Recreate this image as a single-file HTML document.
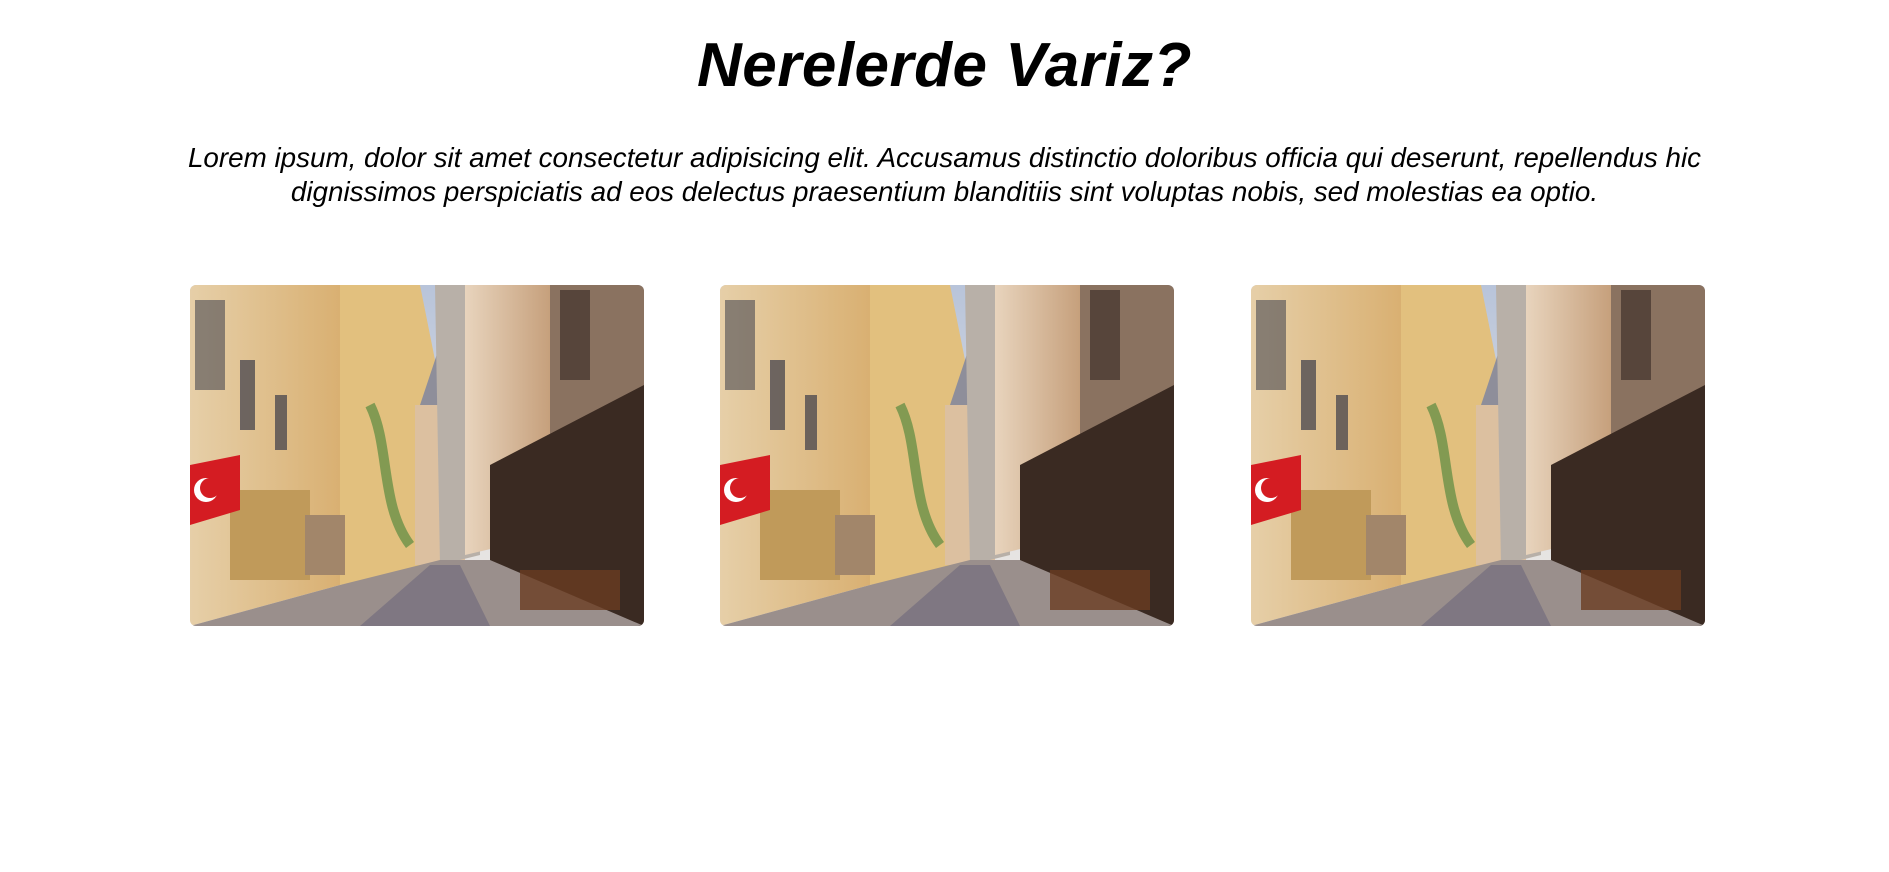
<!DOCTYPE html>
<html><head><meta charset="utf-8">
<style>
html,body{margin:0;padding:0;background:#fff;width:1889px;height:872px;overflow:hidden;}
body{font-family:"Liberation Sans",sans-serif;color:#000;position:relative;}
h1{position:absolute;left:0;right:0;top:28px;margin:0;text-align:center;font-size:62px;font-weight:bold;font-style:italic;letter-spacing:0.5px;line-height:76px;}
p{position:absolute;left:170px;width:1549px;top:141px;margin:0;text-align:center;font-style:italic;font-size:27.8px;line-height:34px;}
.card{position:absolute;top:285px;width:454px;height:341px;border-radius:6px;overflow:hidden;}
</style></head><body>
<h1>Nerelerde Variz?</h1>
<p>Lorem ipsum, dolor sit amet consectetur adipisicing elit. Accusamus distinctio doloribus officia qui deserunt, repellendus hic dignissimos perspiciatis ad eos delectus praesentium blanditiis sint voluptas nobis, sed molestias ea optio.</p>
<svg width="0" height="0" style="position:absolute">
<defs>
<linearGradient id="sky" x1="0" y1="0" x2="0" y2="1"><stop offset="0" stop-color="#b8c4da"/><stop offset="1" stop-color="#f2ece4"/></linearGradient>
<linearGradient id="lb" x1="0" y1="0" x2="1" y2="0"><stop offset="0" stop-color="#e6cfa8"/><stop offset="1" stop-color="#d9b072"/></linearGradient>
<linearGradient id="rb" x1="0" y1="0" x2="1" y2="0"><stop offset="0" stop-color="#e8d4bd"/><stop offset="1" stop-color="#c6a07c"/></linearGradient>
<g id="scene">
<rect width="454" height="341" fill="url(#sky)"/>
<polygon points="0,0 150,0 150,300 0,341" fill="url(#lb)"/>
<polygon points="150,0 230,0 250,100 250,280 150,300" fill="#e2c07e"/>
<rect x="225" y="120" width="50" height="160" fill="#dcc0a0"/>
<polygon points="230,120 250,60 270,120" fill="#8e8e9a"/>
<polygon points="245,0 290,0 290,270 250,280" fill="#b8b0a8"/>
<polygon points="275,0 360,0 360,250 275,270" fill="url(#rb)"/>
<polygon points="360,0 454,0 454,341 300,341 360,250" fill="#8a7260"/>
<polygon points="300,180 454,100 454,341 300,341" fill="#3a2a22"/>
<polygon points="150,300 250,275 300,275 454,341 0,341" fill="#9a8f8c"/>
<polygon points="170,341 240,280 270,280 300,341" fill="#7f7782"/>
<rect x="40" y="205" width="80" height="90" fill="#c09a5a"/>
<rect x="115" y="230" width="40" height="60" fill="#a2866a"/>
<polygon points="0,180 50,170 50,225 0,240" fill="#d41c22"/>
<circle cx="16" cy="205" r="12" fill="#fff"/><circle cx="20" cy="203" r="10" fill="#d41c22"/>
<rect x="5" y="15" width="30" height="90" fill="#4a4a52" opacity=".6"/>
<rect x="50" y="75" width="15" height="70" fill="#3c3c48" opacity=".7"/>
<rect x="85" y="110" width="12" height="55" fill="#3c3c48" opacity=".7"/>
<rect x="370" y="5" width="30" height="90" fill="#4a3a32" opacity=".8"/>
<rect x="330" y="285" width="100" height="40" fill="#6a3c22" opacity=".8"/>
<path d="M180,120 C200,160 190,220 220,260" stroke="#5a8a40" stroke-width="10" fill="none" opacity=".7"/>
</g>
</defs></svg>
<svg class="card" style="left:190px" viewBox="0 0 454 341" preserveAspectRatio="none"><use href="#scene"/></svg>
<svg class="card" style="left:720px" viewBox="0 0 454 341" preserveAspectRatio="none"><use href="#scene"/></svg>
<svg class="card" style="left:1251px" viewBox="0 0 454 341" preserveAspectRatio="none"><use href="#scene"/></svg>
</body></html>
